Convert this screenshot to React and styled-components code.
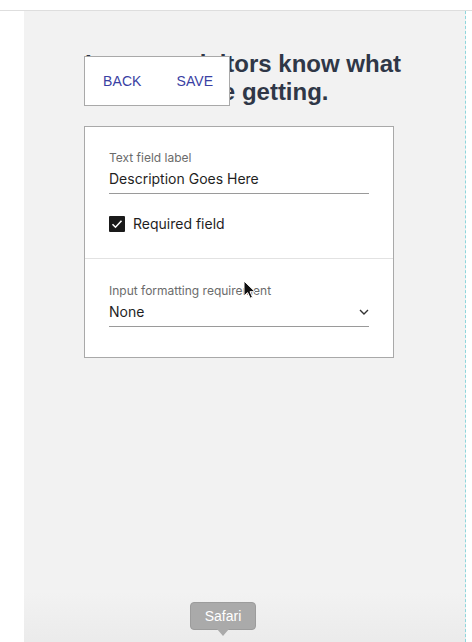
import React from "react"
import styled, { createGlobalStyle } from "styled-components"

const GlobalStyle = createGlobalStyle`
  html, body {
    margin: 0;
    padding: 0;
    height: 100%;
    overflow: hidden;
  }
  body {
    font-family: Inter, "Liberation Sans", sans-serif;
    background: #ffffff;
  }
`

const Page = styled.div`
  display: flex;
  flex-direction: column;
  width: 472px;
  height: 642px;
  background: #ffffff;
`

const TopStrip = styled.div`
  height: 10px;
  flex-shrink: 0;
  border-bottom: 1px solid #dedede;
  background: #ffffff;
`

const Body = styled.div`
  flex: 1;
  display: flex;
  min-height: 0;
`

const Gutter = styled.div`
  width: ${props => props.width}px;
  flex-shrink: 0;
  background: #ffffff;
`

const Canvas = styled.div`
  position: relative;
  flex: 1;
  background: linear-gradient(
    to bottom,
    #f2f2f2 0%,
    #f2f2f2 92%,
    #ebebeb 100%
  );
  border-right: 1px dashed #8fd6dc;
  padding: 39px 0 0 60px;
`

const Heading = styled.h1`
  margin: 0 0 0 -4px;
  width: 326px;
  text-align: center;
  font-family: "Liberation Sans", Arial, sans-serif;
  font-weight: 700;
  font-size: 24px;
  line-height: 28px;
  color: #2f3747;
`

const Toolbar = styled.div`
  position: absolute;
  left: 60px;
  top: 45px;
  width: 146px;
  height: 50px;
  box-sizing: border-box;
  display: flex;
  align-items: center;
  gap: 35px;
  padding-left: 18px;
  background: #ffffff;
  border: 1px solid #a9a9a9;
`

const ToolButton = styled.span`
  font-family: "Liberation Sans", Arial, sans-serif;
  font-size: 14px;
  color: #3a3fa3;
  letter-spacing: 0.1px;
`

const Card = styled.div`
  margin-top: 20px;
  width: 310px;
  box-sizing: border-box;
  background: #ffffff;
  border: 1px solid #a9a9a9;
`

const Section = styled.div`
  padding: ${props => props.top}px 24px ${props => props.bottom}px 24px;
  border-top: ${props => (props.divided ? "1px solid #e2e2e2" : "none")};
`

const FieldLabel = styled.div`
  font-size: 12px;
  line-height: 16px;
  color: #6b6b6b;
`

const FieldValue = styled.div`
  display: flex;
  align-items: center;
  justify-content: space-between;
  font-size: 14px;
  line-height: 20px;
  color: #1f1f1f;
  padding: 3px 0 4px;
  border-bottom: 1px solid #9a9a9a;
`

const CheckRow = styled.label`
  display: flex;
  align-items: center;
  gap: 8px;
  margin-top: 21px;
  font-size: 14px;
  color: #1f1f1f;
`

const CheckBox = styled.span`
  width: 16px;
  height: 16px;
  background: #1a1a1a;
  border-radius: 1px;
  display: flex;
  align-items: center;
  justify-content: center;
`

const Cursor = styled.svg`
  position: absolute;
  left: 219px;
  top: 269px;
`

const Tooltip = styled.div`
  position: absolute;
  left: 166px;
  bottom: 12px;
  width: 66px;
  height: 28px;
  box-sizing: border-box;
  display: flex;
  align-items: center;
  justify-content: center;
  background: #aaaaaa;
  border: 1px solid #9c9c9c;
  border-radius: 4px;
  color: #ffffff;
  font-family: "Liberation Sans", Arial, sans-serif;
  font-size: 14px;

  &::after {
    content: "";
    position: absolute;
    left: 26px;
    bottom: -7px;
    border-left: 6px solid transparent;
    border-right: 6px solid transparent;
    border-top: 7px solid #aaaaaa;
  }
`

const Chevron = () => (
  <svg width="10" height="6" viewBox="0 0 10 6">
    <path d="M1 1l4 4 4-4" fill="none" stroke="#333" strokeWidth="1.4" />
  </svg>
)

const App = () => (
  <>
    <GlobalStyle />
    <Page>
      <TopStrip />
      <Body>
        <Gutter width={24} />
        <Canvas>
          <Heading>Let your visitors know what they're getting.</Heading>
          <Toolbar>
            <ToolButton>BACK</ToolButton>
            <ToolButton>SAVE</ToolButton>
          </Toolbar>
          <Card>
            <Section top={23} bottom={26}>
              <FieldLabel>Text field label</FieldLabel>
              <FieldValue>Description Goes Here</FieldValue>
              <CheckRow>
                <CheckBox>
                  <svg width="12" height="10" viewBox="0 0 12 10">
                    <path
                      d="M1.5 5.2l3 3 6-6.5"
                      fill="none"
                      stroke="#fff"
                      strokeWidth="1.6"
                    />
                  </svg>
                </CheckBox>
                Required field
              </CheckRow>
            </Section>
            <Section divided top={24} bottom={30}>
              <FieldLabel>Input formatting requirement</FieldLabel>
              <FieldValue>
                None
                <Chevron />
              </FieldValue>
            </Section>
          </Card>
          <Cursor width="13" height="19" viewBox="0 0 13 19">
            <path
              d="M1 1v15l3.6-3.4 2.6 5.6 2.3-1-2.5-5.5H12z"
              fill="#111"
              stroke="#fff"
              strokeWidth="1"
            />
          </Cursor>
          <Tooltip>Safari</Tooltip>
        </Canvas>
        <Gutter width={6} />
      </Body>
    </Page>
  </>
)

export default App
